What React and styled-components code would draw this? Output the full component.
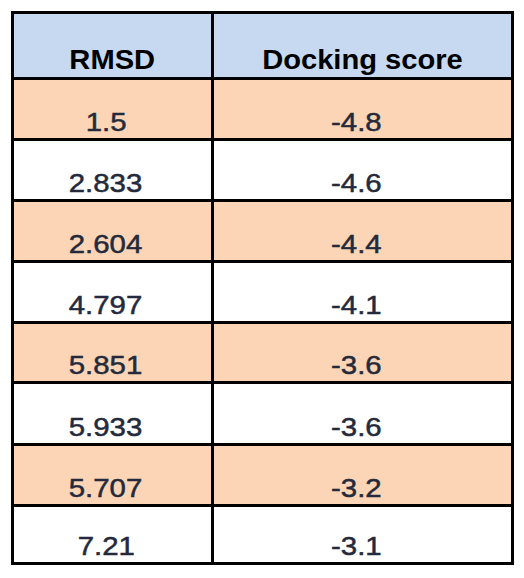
import React from 'react';
import styled, { createGlobalStyle } from 'styled-components';

const GlobalStyle = createGlobalStyle`
  html, body {
    margin: 0;
    padding: 0;
    background: #fff;
  }
  body {
    font-family: "Liberation Sans", Arial, sans-serif;
  }
`;

const Page = styled.div`
  padding: 11px 0 0 11px;
`;

const Table = styled.div`
  display: grid;
  grid-template-columns: 197px 297px;
  grid-template-rows: ${p => p.rows.join(' ')};
  gap: 3px;
  padding: 3px;
  width: max-content;
  background: #000;
`;

const Cell = styled.div`
  display: flex;
  align-items: flex-end;
  justify-content: center;
  box-sizing: border-box;
  padding: 0 ${p => (p.head ? 0 : 13)}px 3px 0;
  background: ${p => (p.head ? '#c6d9f1' : p.shaded ? '#fbd5b5' : '#fff')};
`;

const HeadText = styled.span`
  display: inline-block;
  font-size: 28px;
  line-height: 28px;
  font-weight: 700;
  color: #000;
  transform: scaleX(1.04);
`;

const Value = styled.span`
  display: inline-block;
  font-size: 26px;
  line-height: 26px;
  color: #242a3b;
  -webkit-text-stroke: 0.5px #242a3b;
  transform: scaleX(1.13);
`;

const rows = [
  ['1.5', '-4.8'],
  ['2.833', '-4.6'],
  ['2.604', '-4.4'],
  ['4.797', '-4.1'],
  ['5.851', '-3.6'],
  ['5.933', '-3.6'],
  ['5.707', '-3.2'],
  ['7.21', '-3.1'],
];

const heights = ['63px', '58px', '58px', '58px', '58px', '57px', '59px', '58px', '55px'];

export default function App() {
  return (
    <>
      <GlobalStyle />
      <Page>
        <Table rows={heights}>
          <Cell head><HeadText>RMSD</HeadText></Cell>
          <Cell head><HeadText>Docking score</HeadText></Cell>
          {rows.map(([rmsd, score], i) => (
            <React.Fragment key={i}>
              <Cell shaded={i % 2 === 0}><Value>{rmsd}</Value></Cell>
              <Cell shaded={i % 2 === 0}><Value>{score}</Value></Cell>
            </React.Fragment>
          ))}
        </Table>
      </Page>
    </>
  );
}
